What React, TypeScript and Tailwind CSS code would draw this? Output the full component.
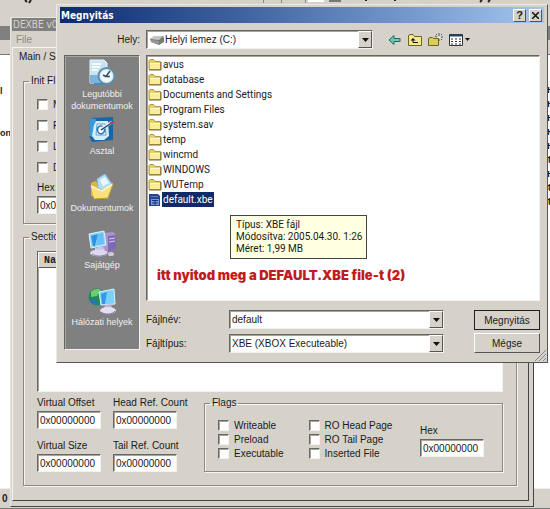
import { useState } from "react";
import type { ReactNode } from "react";

const FOLDERS = [
  "avus",
  "database",
  "Documents and Settings",
  "Program Files",
  "system.sav",
  "temp",
  "wincmd",
  "WINDOWS",
  "WUTemp",
];

const SUNKEN = "border border-t-[#666] border-l-[#666] border-r-[#f4f2ee] border-b-[#f4f2ee] shadow-[inset_1px_1px_0_#a8a49c]";
const RAISED = "bg-[#d6d2ca] border border-t-white border-l-white border-r-[#555] border-b-[#555]";

function FolderIcon() {
  return (
    <svg width="14" height="13" viewBox="0 0 14 13" className="shrink-0">
      <path d="M1 11.5V2.5L2 1.5H5.5L7 3.5H12.5V11.5Z" fill="#e8cf62" stroke="#b09a48" />
      <path d="M2 5H12V11H2Z" fill="#f8ed9b" />
      <path d="M2 5.5H12" stroke="#fffbd0" />
      <path d="M1 12H13V4" stroke="#7d6f34" fill="none" />
    </svg>
  );
}

function XbeIcon() {
  return (
    <svg width="14" height="14" viewBox="0 0 14 14" className="shrink-0">
      <path d="M1 1H10L12 3V13H1Z" fill="#24458c" />
      <path d="M3 3.5H10" stroke="#5f7cba" />
      <path d="M3 6H11V12H3Z" fill="#7c95cf" />
      <path d="M4 7.5H10M4 10H10M7 7V12" stroke="#1a3678" />
    </svg>
  );
}

function RecentIcon() {
  return (
    <svg width="28" height="28" viewBox="0 0 28 28">
      <path d="M2 1H16L19 4V24H2Z" fill="#c8e2f2" stroke="#e9f6fc" />
      <path d="M2 16H19V24H2Z" fill="#79b5dc" />
      <path d="M4 5H13M4 8H12M4 11H10" stroke="#f5fbff" strokeWidth="2" />
      <circle cx="18.500" cy="17" r="8" fill="#dceef2" stroke="#5f8fa8" strokeWidth="2" />
      <circle cx="18.500" cy="17" r="5.500" fill="#f4fafa" />
      <path d="M22 12L18 17.500H22M18 17.500L15 16" stroke="#28506c" strokeWidth="1.500" fill="none" />
      <path d="M6 25H17" stroke="#4d8bb4" strokeWidth="2" />
    </svg>
  );
}

function DesktopIcon() {
  return (
    <svg width="28" height="28" viewBox="0 0 28 28">
      <path d="M2 2L25 1V24L4 26L1 20Z" fill="#1866a8" />
      <path d="M2 2L8 3L6 21L1 20Z" fill="#3f9ad4" />
      <path d="M8 5H20L21 20L16 24H7L4 20L6 9Z" fill="#d5edf9" />
      <path d="M9 8H17L18 19H8Z" fill="#f8fdff" stroke="#5aa2cc" />
      <path d="M10 16C8 10 14 8 16 12C18 17 12 20 10 16Z" fill="none" stroke="#2b78af" strokeWidth="1.500" />
      <path d="M12 14L24 6" stroke="#e7f3f8" strokeWidth="3" />
      <path d="M13 14L25 6" stroke="#244a6a" strokeWidth="1.500" />
      <path d="M22 7L26 6" stroke="#c03a30" strokeWidth="2" />
    </svg>
  );
}

function DocumentsIcon() {
  return (
    <svg width="28" height="28" viewBox="0 0 28 28">
      <path d="M3 10L7 8L10 10L22 12L20 26L3 23Z" fill="#dfb53c" />
      <path d="M9 6L17 1L24 11L17 18L10 15Z" fill="#b8def4" stroke="#7fb4d8" />
      <path d="M12 7L17 4L21 10L15 13Z" fill="#eaf7ff" />
      <path d="M3 13L14 18L25 11L20 25L6 26Z" fill="#f9e27a" />
      <path d="M3 13L14 18L25 11" fill="none" stroke="#fff6bd" strokeWidth="1.500" />
      <path d="M6 26L20 25L25 11" fill="none" stroke="#c69a2b" />
    </svg>
  );
}

function ComputerIcon() {
  return (
    <svg width="28" height="28" viewBox="0 0 28 28">
      <path d="M16 3L25 2L28 5V19L20 22L16 19Z" fill="#a995cf" />
      <path d="M20 6L28 5V19L20 22Z" fill="#8069b4" />
      <path d="M21 9L27 8M21 12L27 11" stroke="#d8caf0" />
      <path d="M1 4L16 1L18 15L3 18Z" fill="#8bd6fb" stroke="#d9f2ff" />
      <path d="M3 6L10 4L7 16L5 16Z" fill="#2f8fe0" />
      <path d="M10 4L15 3L16 14L8 15Z" fill="#66c2f6" />
      <path d="M7 18L15 16L17 20L7 22Z" fill="#c9c3e3" />
      <ellipse cx="11" cy="23" rx="9" ry="3.500" fill="#dcd8ef" />
      <path d="M4 24C8 27 16 27 20 23" stroke="#7f78a8" fill="none" />
      <ellipse cx="23" cy="24" rx="3" ry="2" fill="#cfcce0" />
    </svg>
  );
}

function NetworkIcon() {
  return (
    <svg width="28" height="28" viewBox="0 0 28 28">
      <circle cx="9" cy="10" r="8.500" fill="#218a5b" />
      <path d="M3 5C7 1 11 2 13 3L9 9L3 10Z" fill="#69cf6a" />
      <path d="M2 12L8 13L10 18C5 18 2 15 2 12Z" fill="#2477b9" />
      <path d="M11 5L26 2L27 17L13 18Z" fill="#7cd0fa" stroke="#d8f2ff" />
      <path d="M13 7L19 5L17 17H14Z" fill="#3499e5" />
      <path d="M17 18L23 17L24 21H16Z" fill="#b9b4d6" />
      <ellipse cx="20" cy="23.500" rx="8" ry="3.500" fill="#e3dff2" />
      <path d="M13 25C17 28 24 28 27 24" stroke="#817ba8" fill="none" />
    </svg>
  );
}

const PLACES = [
  { label: "Legutóbbi dokumentumok", icon: <RecentIcon /> },
  { label: "Asztal", icon: <DesktopIcon /> },
  { label: "Dokumentumok", icon: <DocumentsIcon /> },
  { label: "Sajátgép", icon: <ComputerIcon /> },
  { label: "Hálózati helyek", icon: <NetworkIcon /> },
];

function DriveIcon() {
  return (
    <svg width="16" height="12" viewBox="0 0 16 12" className="shrink-0">
      <path d="M1 5L6 2H14L15 4V8L10 11L2 8Z" fill="#777" />
      <path d="M1 5L6 2H14L10 6Z" fill="#c5c5c5" />
      <path d="M2 6L10 7V10L2 8Z" fill="#999" />
      <path d="M11 8H13" stroke="#5a5" />
    </svg>
  );
}

function Chevron() {
  return (
    <span className={`flex h-full w-[14px] shrink-0 items-center justify-center ${RAISED}`}>
      <svg width="7" height="4" viewBox="0 0 7 4">
        <path d="M0 0H7L3.500 4Z" fill="#111" />
      </svg>
    </span>
  );
}

interface DropDownProps {
  id: string;
  options: string[];
  icon?: ReactNode;
}

function DropDown({ id, options, icon }: DropDownProps) {
  return (
    <div className={`flex h-[19px] flex-1 items-center bg-white pl-[2px] ${SUNKEN}`}>
      {icon}
      <select id={id} className="h-full min-w-0 flex-1 appearance-none bg-transparent outline-none">
        {options.map((o) => (
          <option key={o}>{o}</option>
        ))}
      </select>
      <div className="pointer-events-none h-full">
        <Chevron />
      </div>
    </div>
  );
}

interface HexFieldProps {
  id: string;
  label: string;
}

function HexField({ id, label }: HexFieldProps) {
  const [value, setValue] = useState("0x00000000");
  return (
    <div className="flex w-[76px] flex-col">
      <label htmlFor={id} className="h-[15px] whitespace-nowrap leading-[14px]">{label}</label>
      <input
        id={id}
        type="text"
        value={value}
        onChange={(e) => setValue(e.target.value)}
        className={`h-[18px] w-[64px] bg-white px-[2px] outline-none ${SUNKEN}`}
      />
    </div>
  );
}

function Check({ label }: { label: string }) {
  return (
    <label className="flex h-[14px] items-center gap-[5px] whitespace-nowrap">
      <input type="checkbox" className={`size-[11px] shrink-0 appearance-none bg-white ${SUNKEN}`} />
      {label}
    </label>
  );
}

const GROUP = "min-w-0 border border-[#8d8981] shadow-[1px_1px_0_#f6f4f0,inset_1px_1px_0_#f6f4f0]";

// Hex editor that sits behind both windows
function EditorWindow() {
  return (
    <div className="flex min-h-screen flex-col bg-[#d6d2ca] font-bold">
      <div className="flex h-[26px] items-start">
        <svg width="550" height="8" viewBox="0 0 550 8">
          <path d="M25 0L27 2M31 0L29 3M365 0H367M394 0H396M482 0L480 2M490 0L488 2" stroke="#222" strokeWidth="2" />
          <path d="M263.500 0V3M281.500 0V3M305.500 0V3" stroke="#888" />
          <path d="M308 0H324V2H308Z" fill="#fff" />
          <path d="M329 0H341V2H329Z" fill="#777" />
        </svg>
      </div>
      <div className="h-[14px] bg-[#808080]" />
      <div className="h-[15px] border-b border-[#777]" />
      <div className="flex flex-1 justify-between bg-white leading-[14px]">
        <div className="flex flex-col gap-[28px] pt-[29px] text-[9px]">
          <span>l</span>
          <span>on</span>
        </div>
        <div className="flex w-[3px] flex-col overflow-hidden pt-[29px] font-['Liberation_Mono',monospace]">
          {["н", "н", "н", "н", "н", "t", "н", "t", "t"].map((ch, i) => (
            <span key={i}>{ch}</span>
          ))}
        </div>
      </div>
      <div className="flex h-[21px] items-center border-y border-b-[#777] border-t-[#eee] pl-[2px]">0</div>
    </div>
  );
}

function DexbeWindow() {
  return (
    <section className="absolute left-[10px] right-[16px] top-[17px] border border-[#e8e5df] border-b-[#444] border-r-[#444] bg-[#d6d2ca] pb-[5px] pl-px pr-[4px]">
      <header className="h-[13px] bg-[#808080] pl-px font-['DejaVu_Sans_Condensed',sans-serif] leading-[13px] text-[#d6d2ca]">
        DEXBE v0.6
      </header>
      <nav className="flex h-[16px] items-center pl-[4px]">
        <button type="button" className="text-[#8d8981]">File</button>
      </nav>
      <main className="border border-b-[#444] border-l-[#f6f4f0] border-r-[#444] border-t-[#f6f4f0] pb-[14px] pl-[10px] pr-[11px]">
        <h2 className="-ml-[4px] h-[26px] leading-[17px]">Main / Sections</h2>
        <fieldset className={`h-[150px] pl-[13px] ${GROUP}`}>
          <legend className="-ml-[8px] h-[14px] px-[2px] leading-[14px]">Init Flags</legend>
          <div className="flex flex-col gap-[7px] pt-[9px]">
            <Check label="Mount Utility Drive" />
            <Check label="Format Utility Drive" />
            <Check label="Limit to 64 MB" />
            <Check label="Don't Setup HD" />
          </div>
          <div className="pt-[7px]">
            <HexField id="init-hex" label="Hex" />
          </div>
        </fieldset>
        <fieldset className={`mt-[6px] px-[13px] pb-[13px] ${GROUP}`}>
          <legend className="-ml-[8px] h-[14px] px-[2px] leading-[14px]">Sections</legend>
          <div className={`mt-[7px] h-[141px] bg-white ${SUNKEN}`}>
            <div className={`h-[16px] pl-[5px] font-['Liberation_Mono',monospace] font-bold leading-[15px] ${RAISED}`}>Name</div>
          </div>
          <div className="flex pt-[4px]">
            <div className="grid grid-cols-[76px_76px] content-start gap-y-[10px]">
              <HexField id="v-offset" label="Virtual Offset" />
              <HexField id="head-ref" label="Head Ref. Count" />
              <HexField id="v-size" label="Virtual Size" />
              <HexField id="tail-ref" label="Tail Ref. Count" />
            </div>
            <fieldset className={`ml-[15px] flex-1 pb-[11px] pl-[13px] pr-[6px] ${GROUP}`}>
              <legend className="-ml-[8px] h-[14px] px-[2px] leading-[14px]">Flags</legend>
              <div className="flex justify-between">
                <div className="w-[91px] pt-[8px]">
                  <Check label="Writeable" />
                  <Check label="Preload" />
                  <Check label="Executable" />
                </div>
                <div className="w-[112px] pt-[8px]">
                  <Check label="RO Head Page" />
                  <Check label="RO Tail Page" />
                  <Check label="Inserted File" />
                </div>
                <div className="pt-[14px]">
                  <HexField id="flags-hex" label="Hex" />
                </div>
              </div>
            </fieldset>
          </div>
        </fieldset>
      </main>
    </section>
  );
}

function DialogToolbar() {
  return (
    <div className="flex w-[156px] items-center gap-[6px]">
      <button type="button" aria-label="Vissza">
        <svg width="14" height="14" viewBox="0 0 14 14">
          <path d="M1 7L6 2.500V5.500H12V8.500H6V11.500Z" fill="#6cc6b4" stroke="#24695c" />
        </svg>
      </button>
      <button type="button" aria-label="Egy szinttel feljebb">
        <svg width="14" height="14" viewBox="0 0 14 14">
          <path d="M.5 12.500V2.500L2 1.500H5L6.500 3.500H13.500V12.500Z" fill="#f4ea8a" stroke="#6b6426" />
          <path d="M5 5L7.500 7.500H2.500Z" fill="#111" />
          <path d="M5 7V9.500H10" stroke="#111" fill="none" />
        </svg>
      </button>
      <button type="button" aria-label="Új mappa">
        <svg width="15" height="14" viewBox="0 0 15 14">
          <path d="M.5 12.500V5.500L2 4.500H4.500L6 5.500H10.500V12.500Z" fill="#d9cf58" stroke="#6b6426" />
          <path d="M11 0V3M11 6V8M7 3L9 4M13 4H15M8 1L9 2M13 2L14 1M13 6L14 7" stroke="#555" />
          <path d="M10 4H12V5H10Z" fill="#fff3a0" />
        </svg>
      </button>
      <button type="button" aria-label="Nézet" className="flex items-center gap-[2px]">
        <svg width="14" height="14" viewBox="0 0 14 14">
          <path d="M.5 1.500H13.500V12.500H.5Z" fill="#fff" stroke="#333" />
          <path d="M0 2.500H14" stroke="#24406e" strokeWidth="2" />
          <path d="M2 6H4M6 6H8M10 6H12M2 8.500H4M6 8.500H8M10 8.500H12M2 11H4M6 11H8M10 11H12" stroke="#333" />
        </svg>
        <svg width="5" height="3" viewBox="0 0 5 3">
          <path d="M0 0H5L2.500 3Z" fill="#111" />
        </svg>
      </button>
    </div>
  );
}

function OpenDialog() {
  const [fileName, setFileName] = useState("default");

  return (
    <section className="absolute left-[56px] right-[2px] top-[4px] border border-b-[#555] border-l-[#eceae5] border-r-[#555] border-t-[#eceae5] bg-[#d6d2ca] px-[3px] pb-[9px] pt-[2px]">
      <header className="flex h-[16px] items-center gap-[3px] bg-linear-to-r from-[#0c2a70] to-[#a3c6f0] pl-px pr-[2px]">
        <h1 className="flex-1 font-['DejaVu_Sans_Condensed',sans-serif] text-[10px] font-bold text-white">Megnyitás</h1>
        <button type="button" aria-label="Súgó" className={`flex h-[13px] w-[13px] items-center justify-center text-[11px] font-bold ${RAISED}`}>?</button>
        <button type="button" aria-label="Bezárás" className={`flex h-[13px] w-[13px] items-center justify-center ${RAISED}`}>
          <svg width="7" height="7" viewBox="0 0 7 7">
            <path d="M0 0L7 7M7 0L0 7" stroke="#111" strokeWidth="1.500" />
          </svg>
        </button>
      </header>

      <div className="flex pl-[4px] pt-[7px]">
        <label htmlFor="look-in" className="w-[82px] pr-[6px] text-right leading-[19px]">Hely:</label>
        <DropDown id="look-in" options={["Helyi lemez (C:)"]} icon={<DriveIcon />} />
        <div className="w-[15px]" />
        <DialogToolbar />
      </div>

      <div className="flex gap-[6px] pl-[4px] pr-[4px] pt-[6px]">
        <nav className={`flex w-[76px] shrink-0 flex-col gap-[4px] self-start bg-[#808080] pb-[9px] pt-[3px] text-[9px] ${SUNKEN}`}>
          {PLACES.map((p) => (
            <button key={p.label} type="button" className="flex min-h-[53px] flex-col items-center gap-px text-center leading-[12px] text-[#f0f0f0]">
              {p.icon}
              <span>{p.label}</span>
            </button>
          ))}
        </nav>

        <div className="flex min-w-0 flex-1 flex-col">
          <div className={`relative h-[246px] bg-white ${SUNKEN}`}>
            <ul className="pl-px pt-px font-['Roboto',sans-serif]">
              {FOLDERS.map((f) => (
                <li key={f} className="flex h-[15px] items-center">
                  <FolderIcon />
                  <span className="px-px">{f}</span>
                </li>
              ))}
              <li className="flex h-[15px] items-center">
                <XbeIcon />
                <span className="bg-[#0f2a66] px-px leading-[15px] text-white">default.xbe</span>
              </li>
            </ul>
            <p className="pl-[10px] pt-[60px] font-['Inter',sans-serif] text-[13px] font-black leading-[16px] text-[#c01c20]">
              itt nyitod meg a DEFAULT.XBE file-t (2)
            </p>
            <div role="tooltip" className="absolute left-[83px] top-[159px] w-[137px] whitespace-nowrap border border-[#444] bg-[#ffffe1] px-[5px] py-[3px] font-['Roboto',sans-serif] leading-[12px]">
              <p>Típus: XBE fájl</p>
              <p>Módosítva: 2005.04.30. 1:26</p>
              <p>Méret: 1,99 MB</p>
            </div>
          </div>

          <div className="flex pt-[9px]">
            <div className="flex flex-1 flex-col gap-[5px]">
              <div className="flex">
                <label htmlFor="file-name" className="w-[83px] leading-[19px]">Fájlnév:</label>
                <div className={`flex h-[19px] flex-1 bg-white ${SUNKEN}`}>
                  <input
                    id="file-name"
                    type="text"
                    value={fileName}
                    onChange={(e) => setFileName(e.target.value)}
                    className="min-w-0 flex-1 bg-transparent pl-[2px] outline-none"
                  />
                  <button type="button" aria-label="Korábbi fájlok">
                    <Chevron />
                  </button>
                </div>
              </div>
              <div className="flex">
                <label htmlFor="file-type" className="w-[83px] leading-[19px]">Fájltípus:</label>
                <DropDown id="file-type" options={["XBE (XBOX Executeable)"]} />
              </div>
            </div>
            <div className="ml-[30px] flex w-[66px] flex-col gap-[3px]">
              <button type="button" className={`h-[20px] outline outline-[#222] -outline-offset-1 ${RAISED}`}>Megnyitás</button>
              <button type="button" className={`h-[20px] ${RAISED}`}>Mégse</button>
            </div>
          </div>
        </div>
      </div>
      <svg width="11" height="11" viewBox="0 0 11 11" className="absolute bottom-px right-px">
        <path d="M0 11L11 0M4 11L11 4M8 11L11 8" stroke="#888" />
      </svg>
    </section>
  );
}

export default function App() {
  return (
    <div className="relative min-h-screen overflow-hidden font-['Liberation_Sans',sans-serif] text-[10px] text-[#1a1a1a]">
      <EditorWindow />
      <DexbeWindow />
      <OpenDialog />
    </div>
  );
}
